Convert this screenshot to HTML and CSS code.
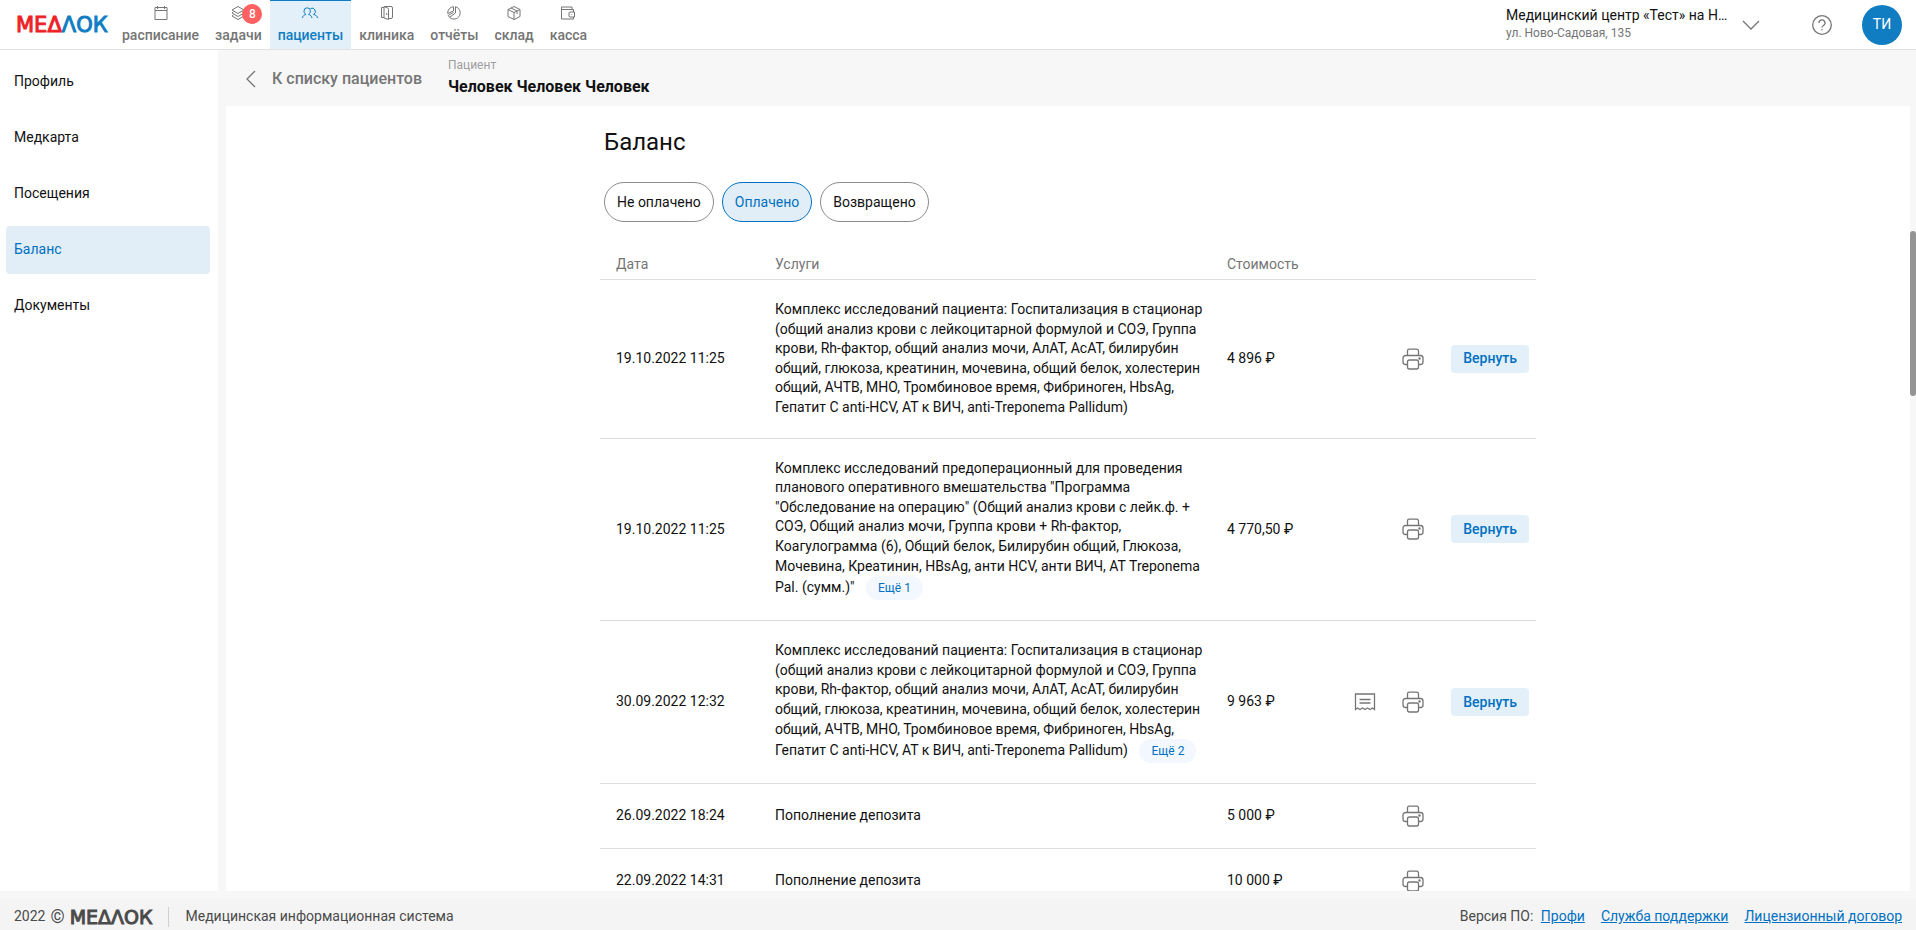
FILE: index.html
```html
<!DOCTYPE html>
<html lang="ru">
<head>
<meta charset="utf-8">
<title>Баланс — Медлок</title>
<link rel="stylesheet" href="styles.css">
</head>
<body>
<svg class="sprite" aria-hidden="true">
  <symbol id="printer" viewBox="0 0 24 24"><path d="M6.500 8.500V4a1.800 1.800 0 0 1 1.800-1.800h7.400A1.800 1.800 0 0 1 17.500 4v4.500M6.500 17.500h-2a2.500 2.500 0 0 1-2.500-2.500v-4A2.500 2.500 0 0 1 4.500 8.500h15A2.500 2.500 0 0 1 22 11v4a2.500 2.500 0 0 1-2.500 2.500h-2M8.500 13h7a2 2 0 0 1 2 2v5a2 2 0 0 1-2 2h-7a2 2 0 0 1-2-2v-5a2 2 0 0 1 2-2z"/><circle cx="18.500" cy="11.500" r=".6"/></symbol>
  <symbol id="receipt" viewBox="0 0 24 24"><path d="M2.500 4h19v15.500l-2-1.500-2.500 1.500-2.500-1.500-2.500 1.500-2.500-1.500L7 19.500 4.500 18l-2 1.500zM6.500 9.500h11M6.500 13h11"/></symbol>
</svg>

<header class="header">
  <a class="logo" href="#"><span class="logo-red">МЕΔ</span><span class="logo-blue">ΛОК</span></a>
  <nav class="nav" aria-label="Основное меню">
    <a class="nav-item" href="#"><svg viewBox="0 0 16 16"><path d="M2 2.500h12v12H2zM2 5.500h12M4.500 1v3M11.500 1v3"/></svg>расписание</a>
    <a class="nav-item" href="#"><span class="nav-icon"><svg viewBox="0 0 16 16"><path d="M8 1.500 14 5 8 8.500 2 5zM3.500 6.800 2 8l6 3.500L14 8l-1.500-1.200M3.500 9.800 2 11l6 3.500 6-3.500-1.500-1.200"/></svg><span class="badge">8</span></span>задачи</a>
    <a class="nav-item nav-item-active" href="#" aria-current="page"><svg viewBox="0 0 16 16"><path d="M.5 13c0-2 1.500-3 3.500-3.500-1.500-1-2-2-2-3.500a3.200 3.200 0 0 1 6.400 0c0 1.500-.7 2.500-2 3.500 2 .5 3.500 1.500 3.500 3.500M8.500 3.500a3.200 3.200 0 1 1 3 6c2.500.5 3.700 1.500 4 3.500"/></svg>пациенты</a>
    <a class="nav-item" href="#"><svg viewBox="0 0 16 16"><path d="M5 12.500H2.500v-10H5M5 1.500h7a1.500 1.500 0 0 1 1.500 1.500v9a1.500 1.500 0 0 1-1.500 1.500H9.500M5 1.500 8.500 3a1.500 1.500 0 0 1 1 1.500v10L5 13zM7.800 8v2"/></svg>клиника</a>
    <a class="nav-item" href="#"><svg viewBox="0 0 16 16"><path d="M9.500 1.700a6.300 6.300 0 1 1-7.300 8.800M1.700 8.500A6.300 6.300 0 0 1 7.500 1.700V6zM9.500 1.700V8L4 12M2.200 10.500 7.500 7.500"/></svg>отчёты</a>
    <a class="nav-item" href="#"><svg viewBox="0 0 16 16"><path d="M8 1.500 14 4.500v7l-6 3-6-3v-7zM2 4.500l6 3 6-3M8 7.500v7M5 3l6 3v3"/></svg>склад</a>
    <a class="nav-item" href="#"><svg viewBox="0 0 16 16"><path d="M13.500 7V4.500h-12v9.500h12v-2M1.500 4.500V2h10.500v2.500M10 7h4.500v5H10a1 1 0 0 1-1-1V8a1 1 0 0 1 1-1zM11.500 9.500h.6"/></svg>касса</a>
  </nav>
  <button class="clinic" type="button">
    <span class="clinic-text"><span class="clinic-name">Медицинский центр «Тест» на Н…</span><span class="clinic-address">ул. Ново-Садовая, 135</span></span>
    <svg class="clinic-arrow" viewBox="0 0 18 18"><path d="M1 5l8 8 8-8"/></svg>
  </button>
  <button class="help" type="button" aria-label="Справка"><svg viewBox="0 0 20 20"><circle cx="10" cy="10" r="9.300"/><path d="M7 8a3 3 0 1 1 4.500 2.500c-1 .6-1.500 1-1.500 2M10 14v1.300"/></svg></button>
  <button class="avatar" type="button">ТИ</button>
</header>

<div class="body">
  <nav class="sidebar" aria-label="Разделы пациента">
    <a class="side-item" href="#">Профиль</a>
    <a class="side-item" href="#">Медкарта</a>
    <a class="side-item" href="#">Посещения</a>
    <a class="side-item side-item-active" href="#" aria-current="page">Баланс</a>
    <a class="side-item" href="#">Документы</a>
  </nav>
  <div class="content">
    <div class="patient-bar">
      <a class="back" href="#"><svg viewBox="0 0 18 18"><path d="M13 1L5 9l8 8"/></svg>К списку пациентов</a>
      <div class="patient"><span class="patient-label">Пациент</span><span class="patient-name">Человек Человек Человек</span></div>
    </div>
    <main class="main">
      <section class="balance">
        <h1 class="title">Баланс</h1>
        <div class="filters">
          <button class="filter" type="button">Не оплачено</button>
          <button class="filter filter-active" type="button" aria-pressed="true">Оплачено</button>
          <button class="filter" type="button">Возвращено</button>
        </div>
        <table class="table">
          <thead>
            <tr><th class="col-date" scope="col">Дата</th><th class="col-services" scope="col">Услуги</th><th class="col-cost" scope="col">Стоимость</th><td class="col-actions"></td></tr>
          </thead>
          <tbody>
            <tr>
              <td>19.10.2022 11:25</td>
              <td>Комплекс исследований пациента: Госпитализация в стационар (общий анализ крови с лейкоцитарной формулой и СОЭ, Группа крови, Rh-фактор, общий анализ мочи, АлАТ, АсАТ, билирубин общий, глюкоза, креатинин, мочевина, общий белок, холестерин общий, АЧТВ, МНО, Тромбиновое время, Фибриноген, HbsAg, Гепатит С anti-HCV, АТ к ВИЧ, anti-Treponema Pallidum)</td>
              <td>4 896 ₽</td>
              <td><div class="actions"><button class="icon-button" type="button" aria-label="Печать"><svg><use href="#printer"/></svg></button><div class="refund-slot"><button class="refund" type="button">Вернуть</button></div></div></td>
            </tr>
            <tr>
              <td>19.10.2022 11:25</td>
              <td>Комплекс исследований предоперационный для проведения планового оперативного вмешательства "Программа "Обследование на операцию" (Общий анализ крови с лейк.ф. + СОЭ, Общий анализ мочи, Группа крови + Rh-фактор, Коагулограмма (6), Общий белок, Билирубин общий, Глюкоза, Мочевина, Креатинин, HBsAg, анти HCV, анти ВИЧ, АТ Treponema Pal. (сумм.)" <button class="more" type="button">Ещё 1</button></td>
              <td>4 770,50 ₽</td>
              <td><div class="actions"><button class="icon-button" type="button" aria-label="Печать"><svg><use href="#printer"/></svg></button><div class="refund-slot"><button class="refund" type="button">Вернуть</button></div></div></td>
            </tr>
            <tr>
              <td>30.09.2022 12:32</td>
              <td>Комплекс исследований пациента: Госпитализация в стационар (общий анализ крови с лейкоцитарной формулой и СОЭ, Группа крови, Rh-фактор, общий анализ мочи, АлАТ, АсАТ, билирубин общий, глюкоза, креатинин, мочевина, общий белок, холестерин общий, АЧТВ, МНО, Тромбиновое время, Фибриноген, HbsAg, Гепатит С anti-HCV, АТ к ВИЧ, anti-Treponema Pallidum) <button class="more" type="button">Ещё 2</button></td>
              <td>9 963 ₽</td>
              <td><div class="actions"><button class="icon-button" type="button" aria-label="Чек"><svg><use href="#receipt"/></svg></button><button class="icon-button" type="button" aria-label="Печать"><svg><use href="#printer"/></svg></button><div class="refund-slot"><button class="refund" type="button">Вернуть</button></div></div></td>
            </tr>
            <tr>
              <td>26.09.2022 18:24</td>
              <td>Пополнение депозита</td>
              <td>5 000 ₽</td>
              <td><div class="actions"><button class="icon-button" type="button" aria-label="Печать"><svg><use href="#printer"/></svg></button><div class="refund-slot"></div></div></td>
            </tr>
            <tr>
              <td>22.09.2022 14:31</td>
              <td>Пополнение депозита</td>
              <td>10 000 ₽</td>
              <td><div class="actions"><button class="icon-button" type="button" aria-label="Печать"><svg><use href="#printer"/></svg></button><div class="refund-slot"></div></div></td>
            </tr>
          </tbody>
        </table>
      </section>
    </main>
  </div>
  <span class="scroll-thumb"></span>
</div>

<footer class="footer">
  <span class="copyright">2022 <span class="copy-sign">©</span><span class="footer-logo">МЕΔΛОК</span></span>
  <span class="system">Медицинская информационная система</span>
  <div class="footer-links"><span class="version">Версия ПО: <a href="#">Профи</a></span><a href="#">Служба поддержки</a><a href="#">Лицензионный договор</a></div>
</footer>
</body>
</html>
```
FILE: styles.css
```css
* { box-sizing: border-box; }

body {
  margin: 0;
  height: 100vh;
  display: flex;
  flex-direction: column;
  overflow: hidden;
  background: #f7f7f7;
  color: #111;
  font: 14px/1.4 Roboto, "Liberation Sans", sans-serif;
}

button {
  margin: 0;
  padding: 0;
  border: 0;
  background: none;
  color: inherit;
  font: inherit;
  cursor: pointer;
}

svg { display: block; fill: none; stroke: #757575; stroke-width: 1.3; }

.sprite { position: absolute; width: 0; height: 0; }

/* Header */
.header {
  flex: none;
  display: flex;
  align-items: center;
  height: 50px;
  padding-right: 14px;
  background: #fff;
  border-bottom: 1px solid #e2e2e2;
}

.logo {
  flex: none;
  width: 98px;
  margin-left: 16px;
  font: 21px/24px "DejaVu Sans", sans-serif;
  text-decoration: none;
  -webkit-text-stroke: 1px currentColor;
}
.logo-red { color: #ed2226; }
.logo-blue { color: #107dc2; }

.nav { display: flex; align-self: stretch; }

.nav-item {
  display: flex;
  flex-direction: column;
  align-items: center;
  gap: 2px;
  padding: 3px 8px 0;
  border-top: 1px solid transparent;
  color: #757575;
  font-weight: 500;
  line-height: 24px;
  text-decoration: none;
}
.nav-item svg { width: 16px; height: 16px; margin-top: 1px; stroke-width: 1; }
.nav-item-active { background: #e3f0f9; border-top-color: #107dc2; color: #107dc2; }
.nav-item-active svg { stroke: #107dc2; }
.nav-icon { position: relative; }

.badge {
  position: absolute;
  left: 12px;
  top: 0;
  width: 20px;
  height: 20px;
  border-radius: 50%;
  background: #ff6161;
  color: #fff;
  font-size: 12px;
  line-height: 20px;
  text-align: center;
}

.clinic { display: flex; align-items: center; gap: 14px; margin-left: auto; text-align: left; }
.clinic-text { display: flex; flex-direction: column; width: 222px; padding-bottom: 2px; }
.clinic-name { line-height: 18px; white-space: nowrap; }
.clinic-address { color: #757575; font-size: 12px; line-height: 18px; }
.clinic-arrow { width: 18px; height: 18px; }
.help { margin: 0 30px 0 52px; }
.help svg { width: 20px; height: 20px; }
.avatar { width: 40px; height: 40px; border-radius: 50%; background: #107dc2; color: #fff; }

/* Page body */
.body { position: relative; flex: 1; min-height: 0; display: flex; gap: 8px; padding-right: 6px; }

.sidebar {
  flex: none;
  display: flex;
  flex-direction: column;
  gap: 8px;
  width: 218px;
  padding: 8px 8px 0 6px;
  background: #fff;
}
.side-item {
  padding: 0 8px 2px;
  border-radius: 4px;
  color: #111;
  line-height: 46px;
  text-decoration: none;
}
.side-item-active { background: #e1edf7; color: #0071c2; }

.content { flex: 1; min-width: 0; display: flex; flex-direction: column; }

.patient-bar { flex: none; display: flex; align-items: center; gap: 26px; height: 56px; padding-left: 16px; }
.back {
  display: flex;
  align-items: center;
  gap: 12px;
  padding-top: 1px;
  color: #757575;
  font-size: 16px;
  font-weight: 500;
  line-height: 24px;
  text-decoration: none;
}
.back svg { width: 18px; height: 18px; }
.patient { display: flex; flex-direction: column; padding-bottom: 3px; }
.patient-label { color: #9e9e9e; font-size: 12px; line-height: 20px; }
.patient-name { font-size: 16px; font-weight: 700; line-height: 23px; }

.main { flex: 1; min-height: 0; overflow: hidden; background: #fff; }
.balance { max-width: 936px; margin: 0 auto; padding-top: 20px; }
.title { margin: 0 4px 24px; font-size: 24px; font-weight: 400; line-height: 32px; }

.filters { display: flex; gap: 8px; margin: 0 4px 24px; }
.filter { height: 40px; padding: 1px 12px 0; border: 1px solid #8c8c8c; border-radius: 20px; }
.filter-active { border-color: #0071c2; background: #e1edf7; color: #0071c2; }

.table { width: 100%; border-collapse: separate; border-spacing: 0; table-layout: fixed; }
.table th, .table td { padding: 20px 0; border-bottom: 1px solid #dedede; text-align: left; }
.table thead th, .table thead td { padding: 10px 0 6px; color: #757575; font-weight: 400; line-height: 17px; }
.table tr > :first-child { padding-left: 16px; }
.table td:nth-child(2) { padding-right: 20px; }
.col-date { width: 175px; }
.col-services { width: 452px; }
.col-cost { width: 126px; }

.more {
  height: 24px;
  margin-left: 8px;
  padding: 0 12px;
  border-radius: 12px;
  background: #f2f8fd;
  color: #0071c2;
  font-size: 12px;
  line-height: 16px;
  vertical-align: middle;
}

.actions { display: flex; align-items: center; justify-content: flex-end; gap: 24px; padding-right: 7px; }
.icon-button svg { width: 24px; height: 24px; }
.refund-slot { width: 80px; display: flex; justify-content: flex-end; }
.refund {
  height: 28px;
  padding: 1px 12px 0;
  border-radius: 4px;
  background: #e3f0f9;
  color: #0071c2;
  font-weight: 500;
}

.scroll-thumb { position: absolute; top: 181px; right: 0; width: 6px; height: 165px; border-radius: 3px; background: #949494; }

/* Footer */
.footer {
  flex: none;
  display: flex;
  align-items: center;
  height: 31px;
  margin-top: 8px;
  padding: 5px 14px 0;
  background: #f4f4f4;
  color: #4a4a4a;
}
.copyright { display: flex; align-items: center; padding-right: 16px; border-right: 1px solid #d0d0d0; }
.copy-sign { margin: 0 5px; font-size: 18px; line-height: 20px; }
.footer-logo { font: 19px/20px "DejaVu Sans", sans-serif; -webkit-text-stroke: 1px currentColor; }
.system { padding-left: 16px; }
.footer-links { display: flex; gap: 16px; margin-left: auto; }
.footer a { color: #0071c2; }
.version a { margin-left: 4px; }
```
